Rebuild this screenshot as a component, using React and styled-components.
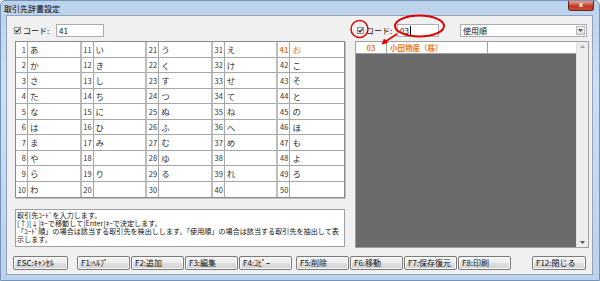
import React from "react";
import styled, { createGlobalStyle } from "styled-components";

const GlobalStyle = createGlobalStyle`
  html, body {
    margin: 0;
    padding: 0;
    background: #ffffff;
  }
  body {
    font-family: "Noto Sans CJK JP", "Noto Sans", sans-serif;
    color: #111;
  }
`;

const ORANGE = "#ee7a2c";

const Window = styled.div`
  position: relative;
  width: 600px;
  height: 281px;
  box-sizing: border-box;
  border: 1px solid #7393bb;
  border-radius: 5px 5px 0 0;
  background: linear-gradient(#bcd2ec, #cddff3 30%, #c4d8ef 70%, #bcd1ea);
  display: flex;
  flex-direction: column;
`;

const TitleBar = styled.div`
  height: 14px;
  display: flex;
  justify-content: space-between;
  align-items: flex-start;
  padding-left: 3px;
`;

const Title = styled.span`
  font-size: 8px;
  line-height: 8px;
  margin-top: 4px;
  color: #000;
`;

const CloseButton = styled.div`
  width: 26px;
  height: 10px;
  margin-right: 5px;
  box-sizing: border-box;
  border: 1px solid #6d2020;
  border-top: none;
  border-radius: 0 0 3px 3px;
  background: linear-gradient(#e8a08c, #d0553e 45%, #b8321e 55%, #c9523a);
  display: flex;
  align-items: center;
  justify-content: center;
  color: #fff;
  font-family: "DejaVu Sans", sans-serif;
  font-weight: bold;
  font-size: 7px;
  line-height: 7px;
`;

const Client = styled.div`
  flex: 1;
  margin: 0 6px 5px 5px;
  border: 1px solid #8ea4c0;
  background: #f0f0f0;
  padding: 8px 3px 4px 8px;
  display: flex;
  flex-direction: column;
`;

const Main = styled.div`
  height: 224px;
  display: flex;
  gap: 10px;
`;

const LeftCol = styled.div`
  width: 330px;
  display: flex;
  flex-direction: column;
`;

const RightCol = styled.div`
  flex: 1;
  display: flex;
  flex-direction: column;
`;

const Toolbar = styled.div`
  height: 13px;
  margin-bottom: 4px;
  display: flex;
  align-items: center;
`;

const Check = styled.span`
  width: 7px;
  height: 7px;
  box-sizing: border-box;
  border: 1px solid #8e8f8f;
  background: linear-gradient(#f4f4f4, #ffffff);
  margin-left: ${(p) => p.$ml}px;
  display: flex;
  align-items: center;
  justify-content: center;
`;

const Label = styled.span`
  width: ${(p) => p.$w}px;
  margin-left: 2px;
  font-size: 8px;
  line-height: 8px;
  white-space: nowrap;
`;

const TextBox = styled.div`
  width: ${(p) => p.$w}px;
  height: 13px;
  box-sizing: border-box;
  border: 1px solid #abadb3;
  background: #fff;
  font-size: 8px;
  line-height: 11px;
  padding-left: 2px;
  display: flex;
  align-items: center;
`;

const Caret = styled.span`
  width: 1px;
  height: 9px;
  background: #000;
  margin-left: 1px;
`;

const Select = styled.div`
  width: 127px;
  height: 13px;
  margin-left: auto;
  margin-right: 2px;
  box-sizing: border-box;
  border: 1px solid #abadb3;
  background: #fff;
  display: flex;
  align-items: stretch;
  font-size: 8px;
  line-height: 11px;
`;

const SelectText = styled.span`
  flex: 1;
  padding-left: 2px;
`;

const SelectArrow = styled.span`
  width: 9px;
  margin: 1px;
  box-sizing: border-box;
  border: 1px solid #b8b8b8;
  background: linear-gradient(#f5f5f5, #dedede);
  display: flex;
  align-items: center;
  justify-content: center;
`;

const KanaGrid = styled.div`
  height: 157px;
  box-sizing: border-box;
  border: 1px solid #8a8a8a;
  box-shadow: 1px 1px 0 #c0c0c0;
  background: #fff;
  display: grid;
  grid-template-columns: repeat(5, 12px 1fr);
  grid-template-rows: repeat(10, 1fr);
`;

const NumCell = styled.div`
  border-right: 1px solid #a8a8a8;
  border-bottom: ${(p) => (p.$last ? "none" : "1px solid #a8a8a8")};
  font-size: 7.5px;
  padding-right: 1px;
  display: flex;
  align-items: center;
  justify-content: flex-end;
  color: ${(p) => (p.$hot ? ORANGE : "#333")};
  font-weight: ${(p) => (p.$hot ? "bold" : "normal")};
`;

const KanaCell = styled.div`
  border-right: ${(p) => (p.$edge ? "none" : "2px solid #bdbdbd")};
  border-bottom: ${(p) => (p.$last ? "none" : "1px solid #a8a8a8")};
  font-size: 8.5px;
  padding-left: 2px;
  display: flex;
  align-items: center;
  color: ${(p) => (p.$hot ? ORANGE : "#333")};
`;

const Description = styled.div`
  margin-top: 11px;
  height: 38px;
  box-sizing: border-box;
  border: 1px solid #a0a0a0;
  background: #fff;
  padding: 1px 0 0 1px;
  font-size: 7.1px;
  line-height: 8px;
  white-space: pre-wrap;
  overflow: hidden;
`;

const List = styled.div`
  flex: 1;
  box-sizing: border-box;
  border: 1px solid #a0a0a0;
  display: flex;
  background: #f0f0f0;
`;

const ListBody = styled.div`
  flex: 1;
  display: flex;
  flex-direction: column;
  background: #6b6b6b;
`;

const ListRow = styled.div`
  height: 12px;
  box-sizing: border-box;
  background: #fff;
  border-bottom: 1px solid #a0a0a0;
  display: flex;
  color: ${ORANGE};
  font-size: 7.5px;
  font-weight: bold;
`;

const ListCell = styled.div`
  width: ${(p) => (p.$w ? `${p.$w}px` : "auto")};
  flex: ${(p) => (p.$w ? "none" : 1)};
  border-right: ${(p) => (p.$end ? "none" : "1px solid #a0a0a0")};
  text-align: ${(p) => p.$align || "left"};
  padding-left: ${(p) => (p.$align === "center" ? 0 : 3)}px;
  line-height: 11px;
`;

const ScrollBar = styled.div`
  width: 11px;
  border-left: 1px solid #e2e2e2;
  background: #ededed;
  display: flex;
  flex-direction: column;
  justify-content: space-between;
  align-items: center;
  padding: 3px 0;
`;

const ButtonRow = styled.div`
  margin-top: 8px;
  margin-left: -2px;
  margin-right: 3px;
  display: flex;
  height: 14px;
`;

const Button = styled.div`
  width: ${(p) => p.$w || 53}px;
  margin-left: ${(p) => p.$ml || 0}px;
  box-sizing: border-box;
  border: 1px solid #7a7a7a;
  border-radius: 2px;
  background: linear-gradient(#f4f4f4, #ececec 48%, #dedede 52%, #d2d2d2);
  box-shadow: inset 0 0 0 1px #fbfbfb;
  font-size: 8px;
  line-height: 12px;
  padding-left: 3px;
  white-space: nowrap;
  color: #111;
`;

const Spacer = styled.div`
  flex: 1;
`;

const Marks = styled.svg`
  position: absolute;
  left: -1px;
  top: -1px;
  pointer-events: none;
`;

const CheckMark = () => (
  <svg width="5" height="5" viewBox="0 0 5 5">
    <path d="M0.5 2.4 L2 4 L4.6 0.6" fill="none" stroke="#222" strokeWidth="1.2" />
  </svg>
);

const Triangle = ({ up }) => (
  <svg width="5" height="3" viewBox="0 0 5 3">
    <path d={up ? "M0 3 L2.5 0 L5 3 Z" : "M0 0 L2.5 3 L5 0 Z"} fill={up ? "#a8a8a8" : "#555"} />
  </svg>
);

const groups = [
  ["あ", "か", "さ", "た", "な", "は", "ま", "や", "ら", "わ"],
  ["い", "き", "し", "ち", "に", "ひ", "み", "", "り", ""],
  ["う", "く", "す", "つ", "ぬ", "ふ", "む", "ゆ", "る", ""],
  ["え", "け", "せ", "て", "ね", "へ", "め", "", "れ", ""],
  ["お", "こ", "そ", "と", "の", "ほ", "も", "よ", "ろ", ""],
];

const buttons = [
  { label: "ESC:ｷｬﾝｾﾙ", w: 55 },
  { label: "F1:ﾍﾙﾌﾟ", ml: 9 },
  { label: "F2:追加", ml: 1 },
  { label: "F3:編集", ml: 1 },
  { label: "F4:ｺﾋﾟｰ", ml: 1 },
  { label: "F5:削除", ml: 4 },
  { label: "F6:移動", ml: 1 },
  { label: "F7:保存復元", ml: 1 },
  { label: "F8:印刷", ml: 1 },
];

const helpText =
  "取引先ｺｰﾄﾞを入力します。\n[↑][↓]ｷｰで移動して[Enter]ｷｰで決定します。\n「ｺｰﾄﾞ順」の場合は該当する取引先を検出しします。「使用順」の場合は該当する取引先を抽出して表示します。";

export default function App() {
  const rows = [];
  for (let r = 0; r < 10; r++) {
    groups.forEach((g, gi) => {
      const num = gi * 10 + r + 1;
      const hot = num === 41;
      const last = r === 9;
      rows.push(
        <NumCell key={`n${num}`} $hot={hot} $last={last}>
          {num}
        </NumCell>,
        <KanaCell key={`k${num}`} $hot={hot} $last={last} $edge={gi === 4}>
          {g[r]}
        </KanaCell>
      );
    });
  }

  return (
    <>
      <GlobalStyle />
      <Window>
        <TitleBar>
          <Title>取引先辞書設定</Title>
          <CloseButton>x</CloseButton>
        </TitleBar>
        <Client>
          <Main>
            <LeftCol>
              <Toolbar>
                <Check $ml={-1}>
                  <CheckMark />
                </Check>
                <Label $w={33}>コード:</Label>
                <TextBox $w={48}>41</TextBox>
              </Toolbar>
              <KanaGrid>{rows}</KanaGrid>
              <Description>{helpText}</Description>
            </LeftCol>
            <RightCol>
              <Toolbar>
                <Check $ml={2}>
                  <CheckMark />
                </Check>
                <Label $w={31}>コード:</Label>
                <TextBox $w={42}>
                  03
                  <Caret />
                </TextBox>
                <Select>
                  <SelectText>使用順</SelectText>
                  <SelectArrow>
                    <Triangle />
                  </SelectArrow>
                </Select>
              </Toolbar>
              <List>
                <ListBody>
                  <ListRow>
                    <ListCell $w={30} $align="center">
                      03
                    </ListCell>
                    <ListCell $w={97}>小田物産（株）</ListCell>
                    <ListCell $end />
                  </ListRow>
                </ListBody>
                <ScrollBar>
                  <Triangle up />
                  <Triangle up={false} />
                </ScrollBar>
              </List>
            </RightCol>
          </Main>
          <ButtonRow>
            {buttons.map((b) => (
              <Button key={b.label} $w={b.w} $ml={b.ml}>
                {b.label}
              </Button>
            ))}
            <Spacer />
            <Button $w={54}>F12:閉じる</Button>
          </ButtonRow>
        </Client>
        <Marks width="600" height="281" viewBox="0 0 600 281">
          <circle cx="359.5" cy="29" r="8.5" fill="none" stroke="#e00000" strokeWidth="1.5" />
          <ellipse cx="419.5" cy="26" rx="24.5" ry="10.5" fill="none" stroke="#e00000" strokeWidth="2" />
          <line x1="397" y1="34" x2="385.5" y2="41.5" stroke="#e00000" strokeWidth="1.5" />
          <path d="M381.5 44.5 L384 38.5 L388 43 Z" fill="#e00000" />
        </Marks>
      </Window>
    </>
  );
}
